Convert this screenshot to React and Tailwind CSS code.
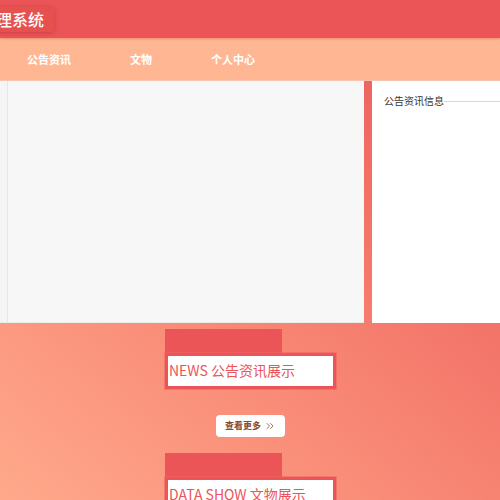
import React from 'react'
import {ChevronsRight} from 'lucide-react'

const font = {fontFamily: '"Noto Sans CJK SC", "Liberation Sans", sans-serif'}

function SectionTitle({label}) {
    return (
        <div className="flex flex-col pl-[165px]">
            <div className="w-[117px] h-[24px] bg-[#eb5558]"></div>
            <div className="w-[171px] h-[36px] border-[3px] border-[#eb5558] bg-white flex items-center shadow-[0_0_0_1px_rgba(240,100,100,0.6)]">
                <span className="text-[14px] text-[#eb5558] leading-none pl-[1px] pb-[2px]">{label}</span>
            </div>
        </div>
    )
}

export default function App() {
    const navItems = ["公告资讯", "文物", "个人中心"]

    return (
        <div className="w-[500px] h-[500px] overflow-hidden" style={font}>
            {/* header */}
            <div className="relative z-10 h-[38px] bg-[#eb5558] flex items-center overflow-hidden shadow-[0_1px_2px_rgba(200,80,60,0.4)]">
                <div className="ml-[-63px] h-[25px] pl-[11px] pr-[10px] rounded-[4px] bg-[#e6514f] shadow-[0_1px_5px_rgba(150,30,30,0.4)] flex items-center">
                    <span className="text-[16px] font-medium text-white leading-none whitespace-nowrap">文物管理系统</span>
                </div>
            </div>

            {/* nav */}
            <div className="h-[42px] bg-[#ffb793] flex items-center pl-[3px]">
                {navItems.map(item => (
                    <div key={item} className="w-[92px] text-center text-[11px] font-semibold text-white">
                        {item}
                    </div>
                ))}
            </div>

            {/* body */}
            <div className="bg-gradient-to-tr from-[#ffa98b] to-[#ec5a5a] h-[420px] border-t border-[#f7c4b4]">
                <div className="flex h-[242px]">
                    <div className="flex w-[364px] bg-[#f7f7f7] border-b border-[#ececec]">
                        <div className="w-[8px] border-r border-[#e6e6e6] bg-[#f5f5f5]"></div>
                        <div className="flex-1"></div>
                    </div>
                    <div className="ml-[8px] flex-1 bg-white pt-[15px] pl-[12px]">
                        <div className="flex items-center">
                            <span className="text-[10px] text-[#333] leading-none whitespace-nowrap">公告资讯信息</span>
                            <div className="flex-1 h-px bg-[#d8d8d8]"></div>
                        </div>
                    </div>
                </div>

                <div className="pt-[6px]">
                    <SectionTitle label="NEWS 公告资讯展示"/>
                </div>

                <div className="flex pl-[216px] pt-[26px]">
                    <button className="w-[69px] h-[22px] bg-white rounded-[4px] flex items-center justify-center gap-[3px] text-[9px] font-semibold text-[#8a4a2e]">
                        查看更多
                        <ChevronsRight size={12} strokeWidth={1.5}/>
                    </button>
                </div>

                <div className="pt-[16px]">
                    <SectionTitle label="DATA SHOW 文物展示"/>
                </div>
            </div>
        </div>
    )
}
